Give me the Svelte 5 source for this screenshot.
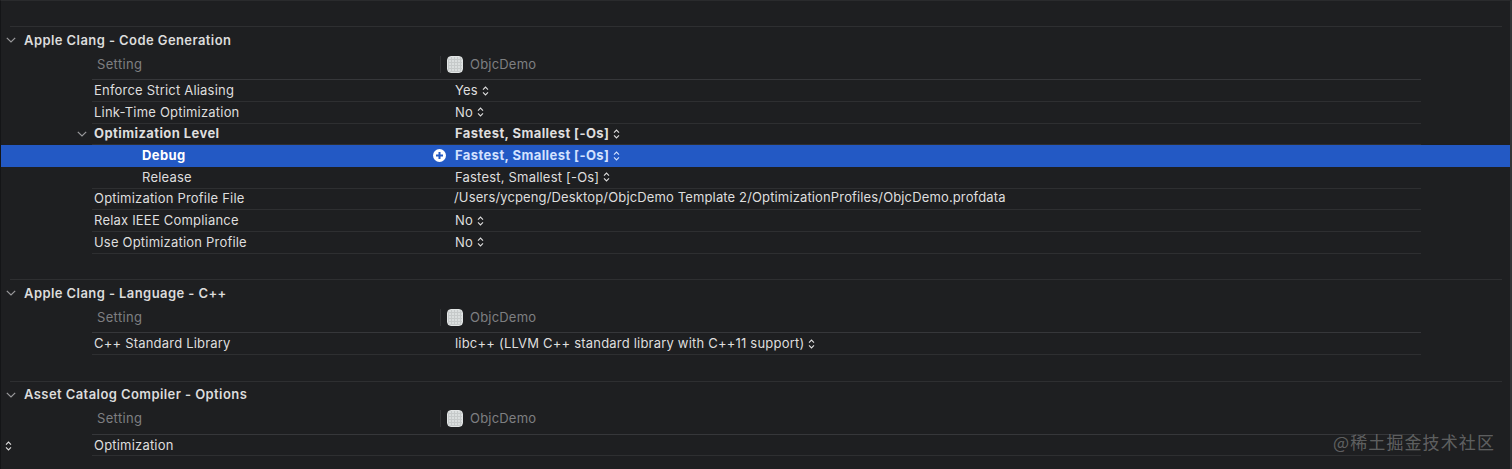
<script>
  const sections = [
    {
      title: 'Apple Clang - Code Generation',
      rows: [
        { label: 'Enforce Strict Aliasing', value: 'Yes', step: true },
        { label: 'Link-Time Optimization', value: 'No', step: true },
        { label: 'Optimization Level', value: 'Fastest, Smallest [-Os]', step: true, strong: true, open: true },
        { label: 'Debug', value: 'Fastest, Smallest [-Os]', step: true, sub: true, selected: true },
        { label: 'Release', value: 'Fastest, Smallest [-Os]', step: true, sub: true },
        { label: 'Optimization Profile File', value: '/Users/ycpeng/Desktop/ObjcDemo Template 2/OptimizationProfiles/ObjcDemo.profdata', path: true },
        { label: 'Relax IEEE Compliance', value: 'No', step: true },
        { label: 'Use Optimization Profile', value: 'No', step: true }
      ]
    },
    {
      title: 'Apple Clang - Language - C++',
      rows: [{ label: 'C++ Standard Library', value: 'libc++ (LLVM C++ standard library with C++11 support)', step: true }]
    },
    {
      title: 'Asset Catalog Compiler - Options',
      rows: [{ label: 'Optimization', value: '', leadStep: true }]
    }
  ];
</script>

{#snippet stepper()}
  <svg class="stepper" viewBox="0 0 7 10" aria-hidden="true">
    <path d="M1 3.6 3.5 1 6 3.6M1 6.4 3.5 9 6 6.4" />
  </svg>
{/snippet}

{#snippet chevron()}
  <svg class="chevron" viewBox="0 0 10 6" aria-hidden="true">
    <path d="M.8.8 5 5 9.2.8" />
  </svg>
{/snippet}

<main class="window">
  {#each sections as section}
    <section class="section">
      <h2 class="title">{@render chevron()}<span>{section.title}</span></h2>
      <div class="head">
        <div class="head-body">
          <span class="head-label">Setting</span>
          <span class="divider"></span>
          <span class="target-icon"></span>
          <span>ObjcDemo</span>
        </div>
      </div>
      {#each section.rows as row}
        <div class="row" class:selected={row.selected}>
          <div class="lead">
            {#if row.open}{@render chevron()}{/if}
            {#if row.leadStep}<span class="lead-step">{@render stepper()}</span>{/if}
          </div>
          <div class="body">
            <div class="label" class:sub={row.sub} class:strong={row.strong || row.selected}>
              <span>{row.label}</span>
              {#if row.selected}
                <svg class="plus" viewBox="0 0 13 13" aria-hidden="true">
                  <circle cx="6.5" cy="6.5" r="6.5" fill="#fff" />
                  <path d="M6.5 3v7M3 6.5h7" stroke="#2359c4" stroke-width="2" />
                </svg>
              {/if}
            </div>
            <div class="value" class:strong={row.strong || row.selected} class:path={row.path}>
              <span>{row.value}</span>
              {#if row.step}{@render stepper()}{/if}
            </div>
          </div>
        </div>
      {/each}
    </section>
  {/each}
  <div class="watermark">@稀土掘金技术社区</div>
</main>

<style>
  :global(body) {
    margin: 0;
    background: #1e1f21;
  }

  .window {
    position: relative;
    box-sizing: border-box;
    width: 1512px;
    height: 469px;
    overflow: hidden;
    padding-top: 25px;
    background: #1e1f21;
    border-top: 1px solid #2a2b2d;
    border-left: 1px solid #141517;
    border-right: 2px solid #333436;
    color: #dedede;
    font: 13px/21px Inter, "Noto Sans", sans-serif;
    letter-spacing: 0.2px;
  }

  .section {
    margin-bottom: 25.5px;
  }

  .title {
    display: flex;
    align-items: center;
    height: 26px;
    margin: 0 8px 0 9px;
    border-top: 1px solid #2e2f31;
    color: #dcdcdc;
    font-size: 13px;
    font-weight: 600;
    letter-spacing: 0.42px;
  }

  .title .chevron {
    margin-left: -4px;
    margin-right: 8px;
  }

  .chevron {
    flex: none;
    width: 10px;
    height: 6px;
    fill: none;
    stroke: #9a9a9c;
    stroke-width: 1.2;
  }

  .head {
    height: 27.2px;
    padding-left: 91px;
  }

  .head-body {
    display: flex;
    align-items: center;
    box-sizing: border-box;
    width: 1329px;
    height: 27.2px;
    padding-bottom: 4px;
    border-bottom: 1px solid #36373a;
    color: #7e7f81;
  }

  .head-label {
    width: 343px;
    padding-left: 5px;
    letter-spacing: 0.35px;
  }

  .divider {
    width: 1px;
    height: 17px;
    background: #303133;
  }

  .target-icon {
    width: 16px;
    height: 17px;
    margin: 0 7px 0 6px;
    border-radius: 4px;
    border: 1px solid #e2e5e5;
    box-sizing: border-box;
    background:
      repeating-linear-gradient(0deg, #c6caca 0 1px, transparent 1px 3px),
      repeating-linear-gradient(90deg, #c6caca 0 1px, #dadede 1px 3px);
  }

  .row {
    display: flex;
    height: 21.7px;
  }

  .selected {
    background: #2359c4;
    color: #fff;
  }

  .lead {
    display: flex;
    flex: none;
    align-items: center;
    justify-content: flex-end;
    width: 91px;
    padding-right: 5px;
    box-sizing: border-box;
  }

  .lead-step {
    flex: 1;
    padding-left: 4px;
    line-height: 0;
  }

  .lead-step .stepper {
    margin: 0;
  }

  .body {
    display: flex;
    box-sizing: border-box;
    width: 1329px;
    border-bottom: 1px solid #2e2f31;
  }

  .selected .body {
    border-bottom-color: transparent;
  }

  .label {
    display: flex;
    flex: none;
    align-items: center;
    justify-content: space-between;
    box-sizing: border-box;
    width: 363px;
    padding: 0 9px 0 2px;
  }

  .sub {
    padding-left: 50px;
  }

  .strong {
    font-weight: 700;
    letter-spacing: 0.42px;
  }

  .plus {
    width: 13px;
    height: 13px;
  }

  .value {
    display: flex;
    align-items: center;
    white-space: nowrap;
  }

  .selected .value {
    color: #d3e2ff;
  }

  .path {
    margin-left: -1px;
    padding-bottom: 2px;
    letter-spacing: 0.14px;
  }

  .stepper {
    flex: none;
    width: 7px;
    height: 10px;
    margin-left: 4px;
    fill: none;
    stroke: currentColor;
    stroke-width: 1.1;
  }

  .watermark {
    position: absolute;
    right: 15px;
    bottom: 15px;
    color: rgba(255, 255, 255, 0.3);
    font: 17px/24px "Noto Sans CJK SC", sans-serif;
    letter-spacing: 1.1px;
  }
</style>
